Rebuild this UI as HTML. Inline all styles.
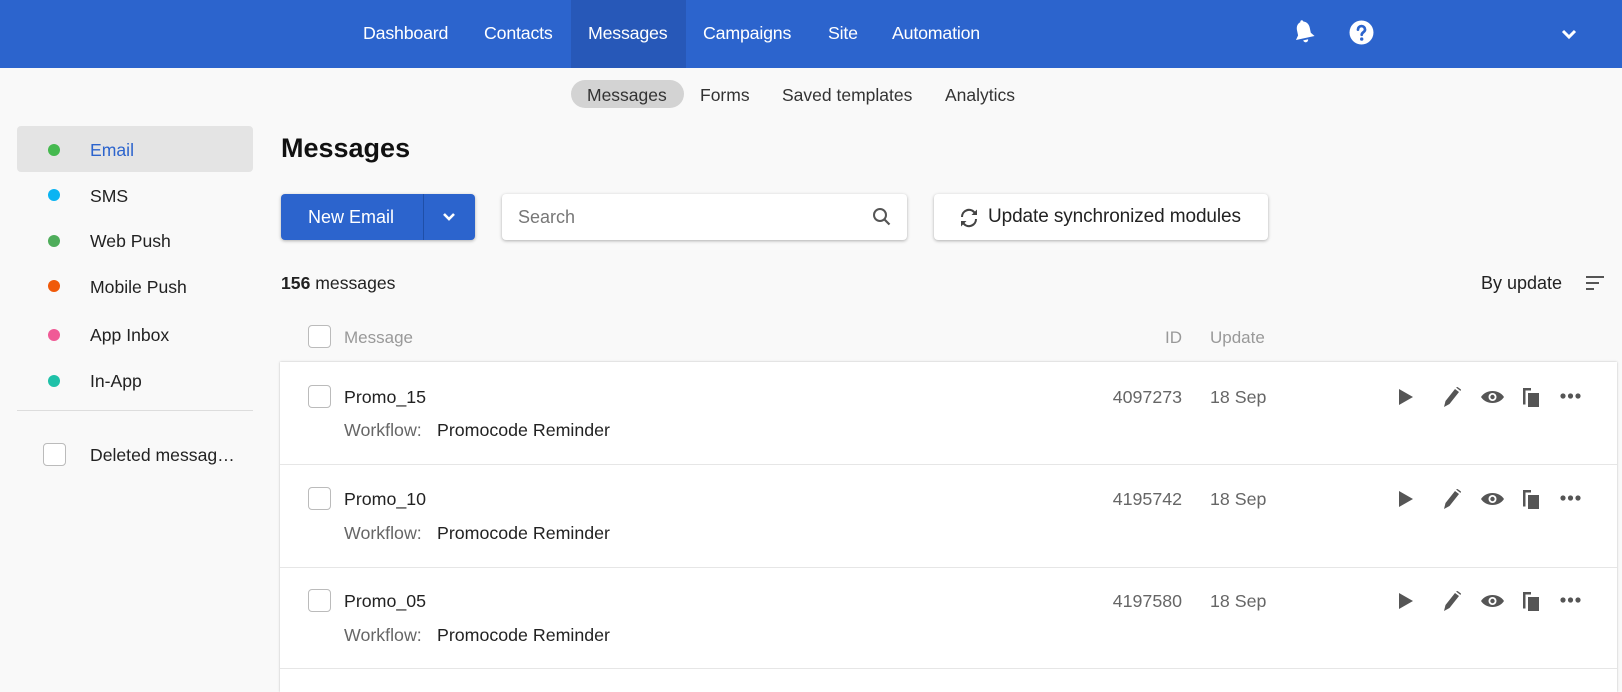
<!DOCTYPE html>
<html><head><meta charset="utf-8"><style>
*{box-sizing:border-box;margin:0;padding:0}
body{width:1622px;height:679px;overflow:hidden;background:#f9f9f9;font-family:"Liberation Sans",Arial,sans-serif;color:#222;position:relative}
.a{position:absolute;white-space:nowrap}
.hdr{left:0;top:0;width:1622px;height:68px;background:#2c64cd}
.nav{color:#fff;font-size:17.8px;top:23px;font-weight:500;letter-spacing:-0.2px}
.sub{font-size:17.5px;top:84px;color:#333}
.side{font-size:17.6px;color:#222}
.dot{width:12px;height:12px;border-radius:50%}
.cb{width:23px;height:23px;border:1.5px solid #bbb;border-radius:4px;background:#fff}
.btn{background:#fff;border-radius:4px;box-shadow:0 1px 3px rgba(0,0,0,.3)}
.g{color:#666}
.t{font-size:17.8px}
</style></head><body>
<div class="a hdr"></div>
<div class="a" style="left:571px;top:0;width:115px;height:68px;background:#2758b8"></div>
<div class="a nav" style="left:363px">Dashboard</div>
<div class="a nav" style="left:484px">Contacts</div>
<div class="a nav" style="left:588px">Messages</div>
<div class="a nav" style="left:703px">Campaigns</div>
<div class="a nav" style="left:828px">Site</div>
<div class="a nav" style="left:892px">Automation</div>
<svg class="a" style="left:1292px;top:19px" width="24" height="26" viewBox="0 0 24 26"><path d="M12 1c1 0 1.5.8 1.5 1.6 3.5 1 5 4 5 7.5v5l3 4H2.5l3-4v-5c0-3.5 1.5-6.5 5-7.5C10.5 1.8 11 1 12 1zM9.5 21h5a2.5 2.5 0 0 1-5 0z" fill="#fff" transform="rotate(-12 12 13)"/></svg>
<svg class="a" style="left:1349px;top:20px" width="25" height="25" viewBox="0 0 24 24"><circle cx="12" cy="12" r="11.5" fill="#fff"/><path d="M8.6 9.2a3.4 3.4 0 0 1 6.8 0c0 2.4-3.2 2.6-3.2 5" stroke="#2c64cd" stroke-width="2.6" fill="none" stroke-linecap="round"/><circle cx="12.2" cy="18.3" r="1.6" fill="#2c64cd"/></svg>
<svg class="a" style="left:1561px;top:28px" width="16" height="12" viewBox="0 0 16 12"><path d="M2 3l6 6 6-6" stroke="#fff" stroke-width="3" fill="none"/></svg>

<div class="a" style="left:571px;top:80px;width:113px;height:28px;border-radius:14px;background:#d3d3d3"></div>
<div class="a sub" style="left:587px;top:85px">Messages</div>
<div class="a sub" style="left:700px;top:85px">Forms</div>
<div class="a sub" style="left:782px;top:85px">Saved templates</div>
<div class="a sub" style="left:945px;top:85px">Analytics</div>

<div class="a" style="left:17px;top:126px;width:236px;height:46px;background:#e4e4e4;border-radius:4px"></div>
<div class="a dot" style="left:48px;top:144px;background:#45b94f"></div><div class="a side" style="left:90px;top:140px;color:#2c64cd">Email</div>
<div class="a dot" style="left:48px;top:189px;background:#0bb4f2"></div><div class="a side" style="left:90px;top:186px">SMS</div>
<div class="a dot" style="left:48px;top:235px;background:#4fad5b"></div><div class="a side" style="left:90px;top:231px">Web Push</div>
<div class="a dot" style="left:48px;top:280px;background:#f05a0a"></div><div class="a side" style="left:90px;top:277px">Mobile Push</div>
<div class="a dot" style="left:48px;top:329px;background:#f05a96"></div><div class="a side" style="left:90px;top:325px">App Inbox</div>
<div class="a dot" style="left:48px;top:375px;background:#1fc1a8"></div><div class="a side" style="left:90px;top:371px">In-App</div>
<div class="a" style="left:17px;top:410px;width:236px;height:1px;background:#ddd"></div>
<div class="a cb" style="left:43px;top:443px"></div><div class="a side" style="left:90px;top:445px">Deleted messag…</div>

<div class="a" style="left:281px;top:133px;font-size:27px;font-weight:bold;color:#111">Messages</div>
<div class="a" style="left:281px;top:194px;width:194px;height:46px;background:#2c64cd;border-radius:4px;box-shadow:0 1px 3px rgba(0,0,0,.3)"></div>
<div class="a" style="left:423px;top:194px;width:1px;height:46px;background:#1f4fa8"></div>
<div class="a" style="left:308px;top:207px;color:#fff;font-size:18px">New Email</div>
<svg class="a" style="left:442px;top:212px" width="14" height="10" viewBox="0 0 14 10"><path d="M2 2l5 5 5-5" stroke="#fff" stroke-width="2.6" fill="none"/></svg>
<div class="a btn" style="left:502px;top:194px;width:405px;height:46px"></div>
<div class="a" style="left:518px;top:207px;font-size:18px;color:#777">Search</div>
<svg class="a" style="left:872px;top:207px" width="20" height="20" viewBox="0 0 20 20"><circle cx="8" cy="8" r="6" stroke="#555" stroke-width="2" fill="none"/><path d="M12.5 12.5l5 5" stroke="#555" stroke-width="2.2"/></svg>
<div class="a btn" style="left:934px;top:194px;width:334px;height:46px"></div>
<svg class="a" style="left:960px;top:208px" width="18" height="20" viewBox="0 0 18 20"><path d="M3 9a6 6 0 0 1 10.5-4l-2 2H17V1.5l-2 2A8 8 0 0 0 1 9zM15 11a6 6 0 0 1-10.5 4l2-2H1v5.5l2-2A8 8 0 0 0 17 11z" fill="#444"/></svg>
<div class="a" style="left:988px;top:206px;font-size:19px;color:#222;letter-spacing:-0.1px">Update synchronized modules</div>

<div class="a" style="left:281px;top:273px;font-size:17.6px"><b>156</b> messages</div>
<div class="a" style="left:1481px;top:273px;font-size:18px">By update</div>
<svg class="a" style="left:1586px;top:275px" width="18" height="16" viewBox="0 0 18 16"><path d="M0 2h18M0 8h13M0 14h8" stroke="#555" stroke-width="2"/></svg>

<div class="a cb" style="left:308px;top:325px"></div>
<div class="a" style="left:344px;top:328px;font-size:17px;color:#999">Message</div>
<div class="a" style="left:1165px;top:328px;font-size:17px;color:#999">ID</div>
<div class="a" style="left:1210px;top:328px;font-size:17px;color:#999">Update</div>

<div class="a" style="left:280px;top:362px;width:1337px;height:330px;background:#fff;box-shadow:0 0 2px rgba(0,0,0,.25)"></div>
<div class="a" style="left:280px;top:464px;width:1337px;height:1px;background:#e6e6e6"></div>
<div class="a" style="left:280px;top:567px;width:1337px;height:1px;background:#e6e6e6"></div>
<div class="a" style="left:280px;top:668px;width:1337px;height:1px;background:#e6e6e6"></div>

<div class="a cb" style="left:308px;top:385px"></div>
<div class="a t" style="left:344px;top:387px">Promo_15</div>
<div class="a t g" style="left:344px;top:420px">Workflow:</div><div class="a t" style="left:437px;top:420px">Promocode Reminder</div>
<div class="a g t" style="left:1100px;top:387px;width:82px;text-align:right">4097273</div>
<div class="a g t" style="left:1210px;top:387px">18 Sep</div>

<div class="a cb" style="left:308px;top:487px"></div>
<div class="a t" style="left:344px;top:489px">Promo_10</div>
<div class="a t g" style="left:344px;top:523px">Workflow:</div><div class="a t" style="left:437px;top:523px">Promocode Reminder</div>
<div class="a g t" style="left:1100px;top:489px;width:82px;text-align:right">4195742</div>
<div class="a g t" style="left:1210px;top:489px">18 Sep</div>

<div class="a cb" style="left:308px;top:589px"></div>
<div class="a t" style="left:344px;top:591px">Promo_05</div>
<div class="a t g" style="left:344px;top:625px">Workflow:</div><div class="a t" style="left:437px;top:625px">Promocode Reminder</div>
<div class="a g t" style="left:1100px;top:591px;width:82px;text-align:right">4197580</div>
<div class="a g t" style="left:1210px;top:591px">18 Sep</div>

<svg class="a" style="left:1397px;top:387px" width="200" height="260" viewBox="0 0 200 260">
<defs><g id="ic" fill="#555">
<path d="M2 2l14 8-14 8z"/>
<path d="M47 20l1.5-6 9.5-12 4 3-9.5 12z M59 0.5l1.5-0.5 3.5 2.5-0.5 1.5z"/>
<path d="M84 10c5-8 18-8 23 0-5 8-18 8-23 0z"/><circle cx="95.5" cy="10" r="4" fill="#fff"/><circle cx="95.5" cy="10" r="2.2"/>
<path d="M126 1h8v2.5h-5.5v14H126z"/><rect x="131" y="6" width="11" height="14"/>
<circle cx="166" cy="9" r="2.6"/><circle cx="173.5" cy="9" r="2.6"/><circle cx="181" cy="9" r="2.6"/>
</g></defs>
<use href="#ic" y="0"/><use href="#ic" y="102"/><use href="#ic" y="204"/>
</svg>
</body></html>
